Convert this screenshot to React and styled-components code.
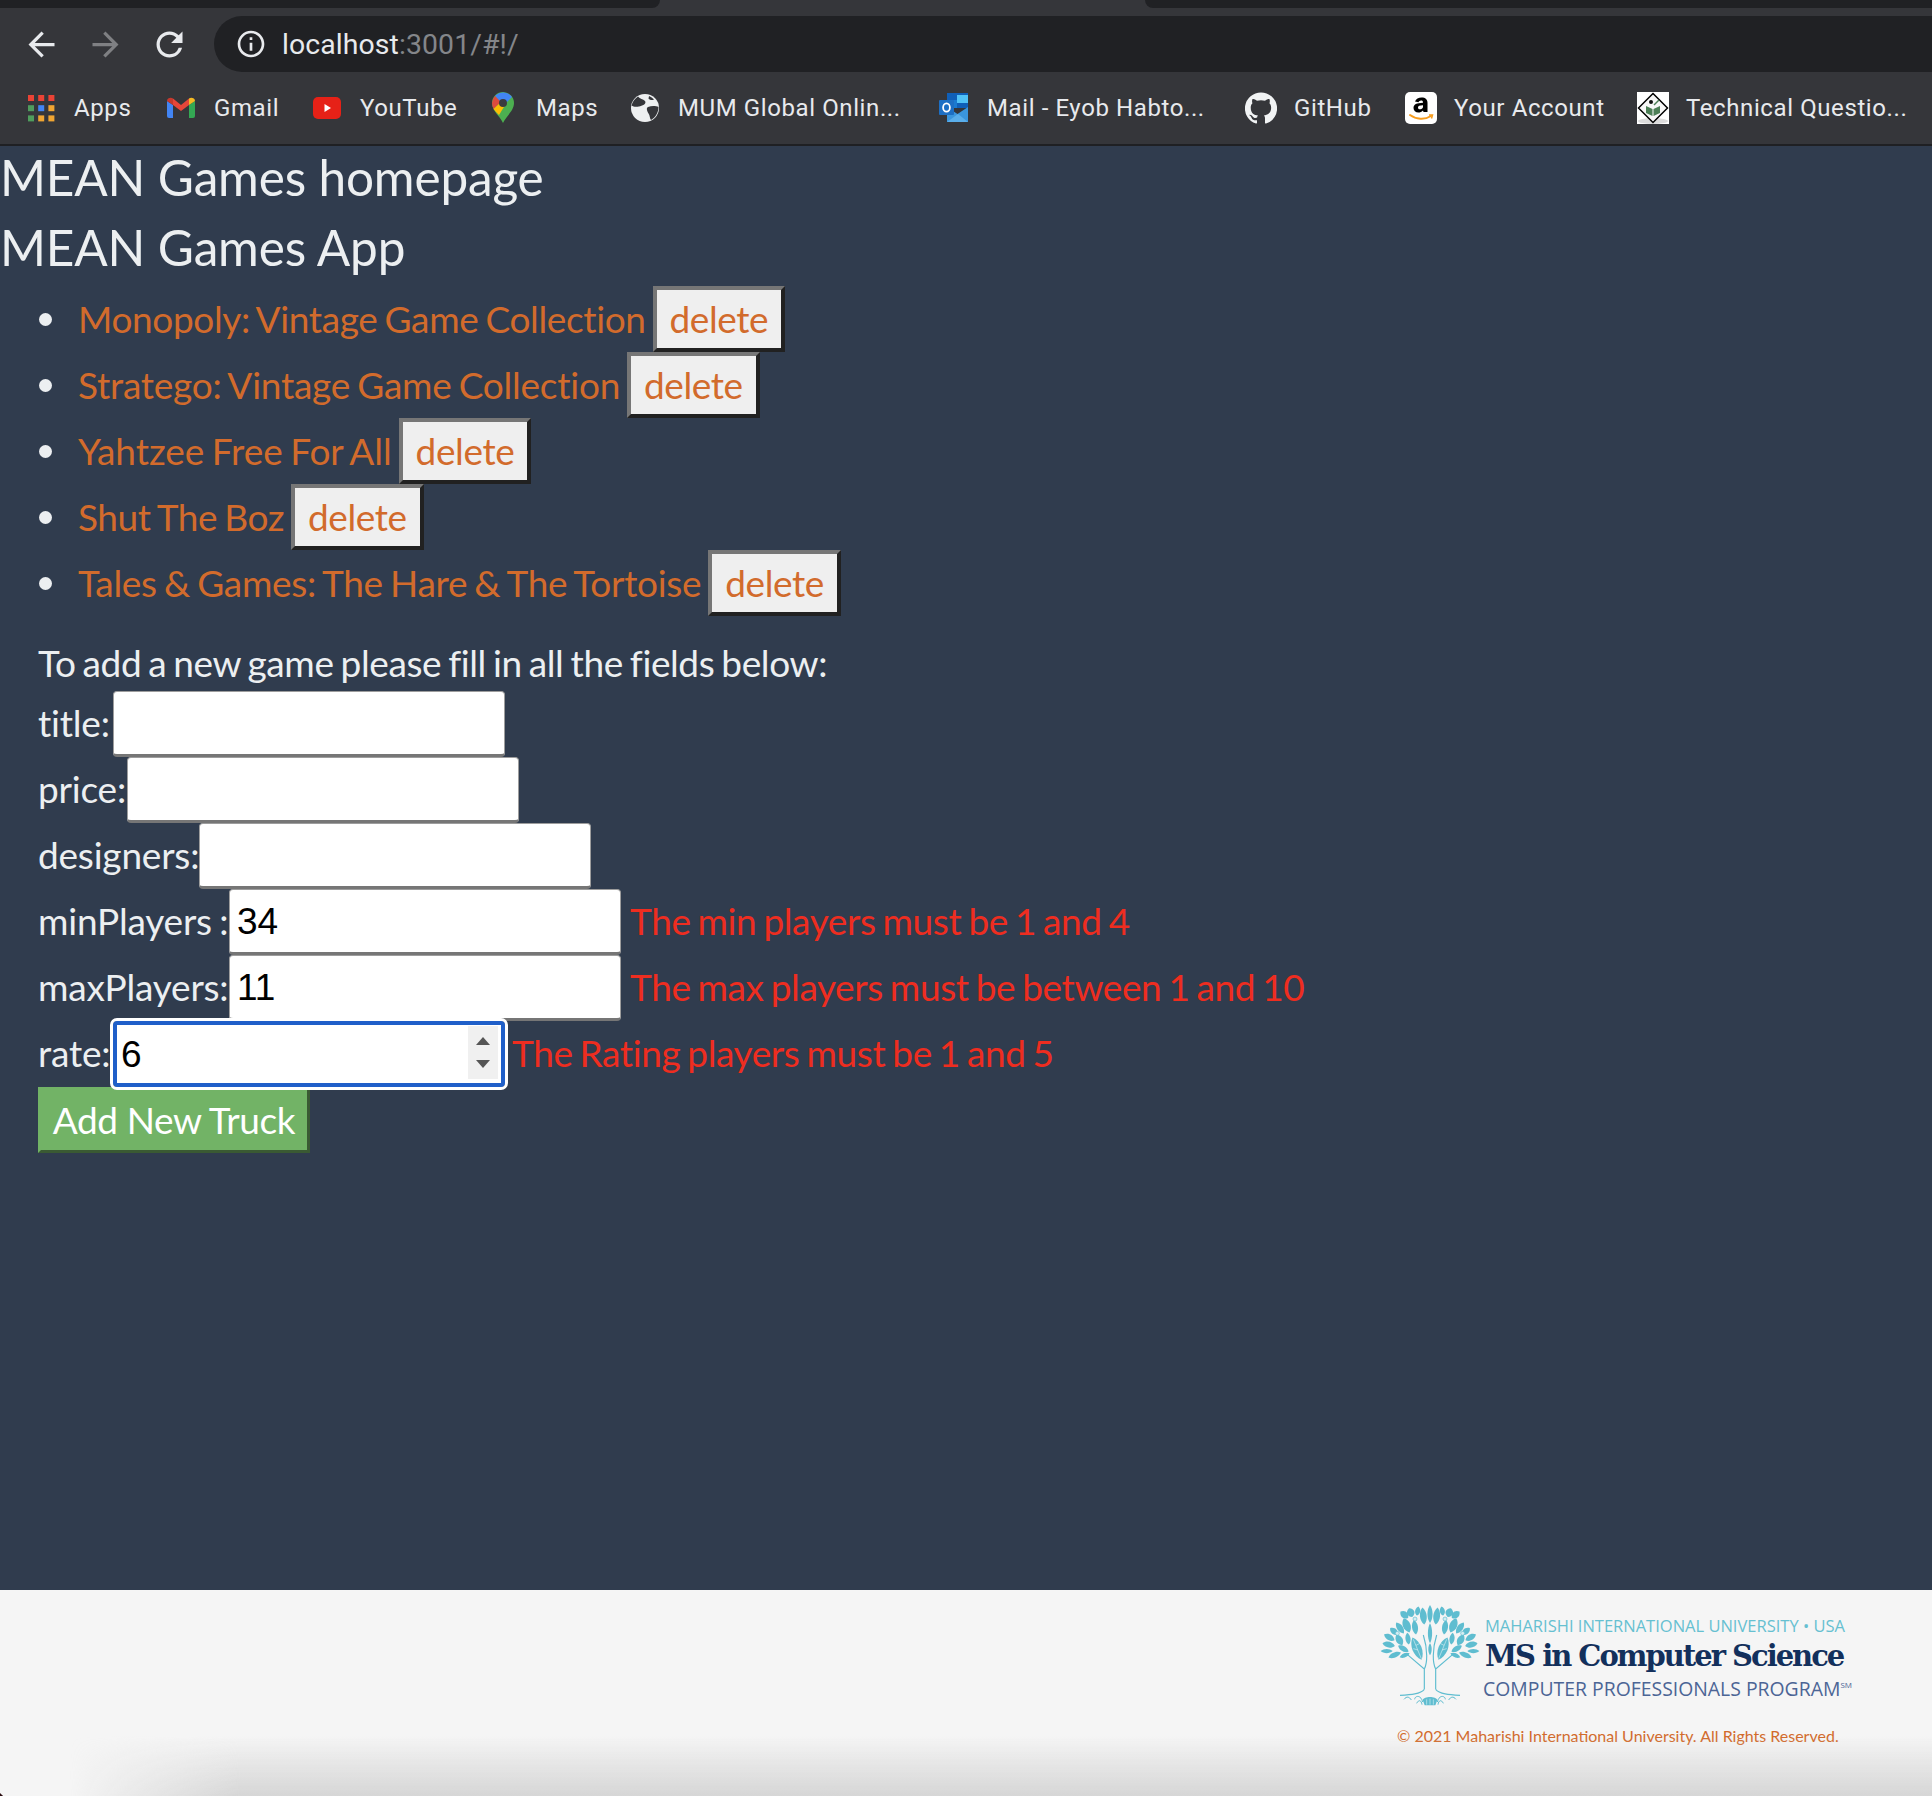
import React from "react";
import styled, { createGlobalStyle } from "styled-components";

const Global = createGlobalStyle`
  html, body { margin: 0; padding: 0; background: #303c4e; }
  body { width: 1932px; height: 1796px; overflow: hidden; font-family: Lato, "Liberation Sans", sans-serif; }
`;

const Page = styled.div`
  width: 1932px; height: 1796px; display: flex; flex-direction: column; position: relative; overflow: hidden;
`;
const TabStrip = styled.div`
  height: 8px; background: #35363a; display: flex; justify-content: space-between;
`;
const Tab = styled.div`
  height: 8px; background: #202124; width: ${p => p.$w}px;
  border-radius: ${p => (p.$side === "left" ? "0 0 14px 0" : "0 0 0 14px")};
`;
const Toolbar = styled.div`
  height: 64px; background: #35363a; display: flex; align-items: flex-start; padding-top: 8px; box-sizing: border-box;
`;
const NavIcons = styled.div`
  width: 214px; height: 56px; display: flex; align-items: center; padding-left: 22px; gap: 25px; box-sizing: border-box;
`;
const NavBtn = styled.svg`
  width: 39px; height: 39px; fill: ${p => (p.$dim ? "#7f8083" : "#e8eaed")}; flex: none;
`;
const Omnibox = styled.div`
  flex: 1; height: 56px; background: #202124; border-radius: 28px 0 0 28px; display: flex; align-items: center; padding-left: 21px; gap: 15px;
`;
const InfoIcon = styled.svg` width: 32px; height: 32px; fill: #e8eaed; flex: none; `;
const Url = styled.div`
  font-family: Roboto, sans-serif; font-size: 28.4px; color: #e8eaed; letter-spacing: 0.1px;
  span { color: #84868a; }
`;
const Bookmarks = styled.div`
  height: 74px; box-sizing: border-box; background: #35363a; border-bottom: 2px solid #1f2023;
  display: flex; align-items: center; padding-left: 25px;
`;
const Bookmark = styled.div`
  display: flex; align-items: center; gap: 17px; flex: none; width: ${p => (p.$w ? `${p.$w}px` : "auto")};
  font-family: Roboto, sans-serif; font-size: 24px; color: #e8eaed; letter-spacing: 0.6px; white-space: nowrap;
`;
const Fav = styled.svg` width: 32px; height: 32px; flex: none; `;

const Main = styled.main`
  flex: 1; background: #303c4e; color: #eceff1; font-size: 37px; line-height: 66px; display: flex; flex-direction: column;
  letter-spacing: -0.4px; word-spacing: -2px;
`;
const Title = styled.h1`
  margin: 0; font-size: 49.5px; font-weight: 400; line-height: 62px; color: #eceff1; height: 70px; letter-spacing: -0.15px; word-spacing: 0;
`;
const GameList = styled.ul`
  margin: 0; padding: 0 0 0 38px; list-style: none; display: flex; flex-direction: column;
`;
const GameItem = styled.li`
  display: flex; align-items: center; height: 66px; padding-left: 40px; position: relative;
  &::before { content: ""; position: absolute; left: 1px; top: 27px; width: 13px; height: 13px; border-radius: 50%; background: #eceff1; }
`;
const GameLink = styled.a`
  color: #d26b2c; text-decoration: none; margin-right: 7px; white-space: nowrap; letter-spacing: ${p => p.$sp}px;
`;
const DeleteBtn = styled.button`
  height: 66px; box-sizing: border-box; padding: 0 13px 2px; background: #efefef; color: #d26b2c;
  border-width: 4px; border-style: solid; border-color: #767676 #212121 #212121 #767676;
  font: inherit; line-height: 1; letter-spacing: inherit;
`;
const Form = styled.form` margin: 0; padding: 0 0 0 38px; display: flex; flex-direction: column; `;
const Hint = styled.div` height: 75px; padding-top: 22px; box-sizing: border-box; line-height: 50px; white-space: nowrap; `;
const Row = styled.div` display: flex; align-items: center; height: 66px; white-space: nowrap; `;
const FieldLabel = styled.label` flex: none; width: ${p => p.$w}px; margin-bottom: 2px; letter-spacing: -0.2px; `;
const Field = styled.div`
  width: 392px; height: 66px; box-sizing: border-box; background: #fff; border-radius: 4px; padding-top: 2px;
  ${p => (p.$focus
    ? "border: 4px solid #1f5fc9; outline: 3px solid #fff; outline-offset: 0; padding-left: 4px;"
    : "border: 1px solid #9d9d9d; border-bottom: 3px solid #767676; padding-left: 7px;")}
  color: #000; font-family: "Liberation Sans", sans-serif; font-size: 37px; letter-spacing: 0; display: flex; align-items: center; position: relative;
  flex: none;
`;
const Spinner = styled.div`
  position: absolute; right: 3px; top: 1px; bottom: 4px; width: 30px; background: #f0f0f0; display: flex; flex-direction: column; align-items: center; justify-content: center; gap: 15px;
`;
const Arrow = styled.span`
  width: 0; height: 0; border-left: 7.5px solid transparent; border-right: 7.5px solid transparent;
  ${p => (p.$down ? "border-top: 8px solid #555;" : "border-bottom: 8px solid #555;")}
`;
const Error = styled.span` color: #ee2d20; margin-left: ${p => p.$ml ?? 9}px; margin-bottom: 2px; `;
const AddBtn = styled.button`
  width: 272px; height: 66px; box-sizing: border-box; background: #72b366; color: #fff; font: inherit; line-height: 1; padding: 0 0 2px; letter-spacing: inherit;
  border-width: 3px; border-style: solid; border-color: #72b366 #3a5a33 #3a5a33 #72b366; white-space: nowrap;
`;

const Footer = styled.footer`
  height: 206px; background: #f5f5f5; position: relative; display: flex; flex-direction: column; align-items: flex-end; padding: 14px 0 0 0; box-sizing: border-box;
  &::after { content: ""; position: absolute; left: 0; right: 0; bottom: 0; height: 60px;
    background: linear-gradient(to bottom, rgba(210,210,210,0), rgba(208,208,208,.85));
    -webkit-mask-image: linear-gradient(to right, transparent 70px, #000 240px); mask-image: linear-gradient(to right, transparent 70px, #000 240px); }
  &::before { content: ""; position: absolute; left: -7px; bottom: -7px; width: 10px; height: 10px; background: #2a0d10; transform: rotate(45deg); }
`;
const Logo = styled.div` display: flex; align-items: flex-start; width: 552px; gap: 5px; box-sizing: border-box; `;
const Tree = styled.svg` width: 100px; height: 104px; flex: none; `;
const LogoText = styled.div` display: flex; flex-direction: column; white-space: nowrap; padding-top: 11px; `;
const LogoTop = styled.div` font-family: "Open Sans", sans-serif; font-size: 16.5px; color: #66c0d1; line-height: 22px; `;
const LogoMain = styled.div` font-family: "DejaVu Serif", serif; font-weight: 700; font-size: 29px; color: #13305c; line-height: 38px; letter-spacing: -2px; `;
const LogoSub = styled.div`
  font-family: "Open Sans", sans-serif; font-size: 19.4px; color: #4c6595; line-height: 28px; margin-left: -2px;
  sup { font-size: 8px; vertical-align: 8px; line-height: 0; }
`;
const Copyright = styled.div` font-size: 16px; color: #d26b2c; width: 535px; line-height: 22px; margin-top: 17px; white-space: nowrap; `;

const games = [
  { title: "Monopoly: Vintage Game Collection", sp: -0.37 },
  { title: "Stratego: Vintage Game Collection", sp: -0.25 },
  { title: "Yahtzee Free For All", sp: -0.03 },
  { title: "Shut The Boz", sp: -0.4 },
  { title: "Tales & Games: The Hare & The Tortoise", sp: -0.3 },
];

const leafPath = (w, h) => `M0 ${-h} C${w} ${-h / 2} ${w} ${h / 2} 0 ${h} C${-w} ${h / 2} ${-w} ${-h / 2} 0 ${-h}Z`;
const Leaf = ({ x, y, r, w, h, fill = "#5fbdd0" }) => (
  <path d={leafPath(w * 1.7, h)} fill={fill} transform={`translate(${x} ${y}) rotate(${r})`} />
);
const sideLeaves = [
  [160,48,-6,8,26],[143,33,10,6,14],[122,38,-20,9,14],[103,44,-50,8,15],[135,82,-8,7,22],[110,76,-22,9,23],[90,84,-35,7,20],[72,94,-50,7,15],
  [58,112,-60,7,18],[88,120,-30,8,18],[114,116,-8,6,18],[56,134,-78,7,19],[50,153,-90,5,18],[74,165,-112,6,20],[100,146,-60,6,18],[104,166,-112,5,16],
];
const TreeSide = () => (
  <g>
    {sideLeaves.map(([x, y, r, w, h], i) => <Leaf key={i} x={x} y={y} r={r} w={w} h={h} />)}
    <Leaf x={141} y={146} r={-22} w={11} h={36} />
    <path d="M154 176 L130 118 M144 150 L130 146 M138 136 L150 130" stroke="#d3edf2" strokeWidth="2" fill="none" />
    <circle cx="135" cy="57" r="6" fill="#d3edf2" stroke="#5fbdd0" strokeWidth="2" />
    <circle cx="82" cy="100" r="6" fill="#d3edf2" stroke="#5fbdd0" strokeWidth="2" />
    <g fill="none" stroke="#5fbdd0" strokeWidth="3.500">
      <path d="M163 268 L163 207 L108 160" />
      <path d="M163 207 C172 190 174 150 160 105" />
      <path d="M163 268 C152 282 122 284 90 286" />
      <path d="M102 298 C110 288 118 290 124 300 M134 298 C134 288 152 282 158 306 M140 310 C146 298 154 300 156 314" strokeWidth="3" />
    </g>
  </g>
);
function TreeLogo() {
  return (
    <Tree viewBox="30 12 300 312">
      <TreeSide />
      <g transform="matrix(-1 0 0 1 360 0)"><TreeSide /></g>
      <Leaf x={180} y={42} r={0} w={6} h={27} />
      <Leaf x={180} y={100} r={0} w={5} h={30} />
      <Leaf x={180} y={148} r={0} w={4} h={18} />
      <path d="M158 300 C162 288 198 288 202 300 L196 316 H164 Z" fill="#5fbdd0" />
      <path d="M170 314 V298 M180 314 V296 M190 314 V298" stroke="#d3edf2" strokeWidth="2" />
    </Tree>
  );
}

const AppsIcon = () => (
  <Fav viewBox="0 0 32 32">
    {["#ea4335","#ea4335","#ea4335","#4f9d5d","#4285f4","#f0a532","#4f9d5d","#f0a532","#f0a532"].map((c, i) => (
      <rect key={i} x={3 + (i % 3) * 10.2} y={3 + Math.floor(i / 3) * 10.2} width="6" height="6" fill={c} />
    ))}
  </Fav>
);
const GmailIcon = () => (
  <Fav viewBox="0 0 32 32">
    <path d="M2 9 V24 Q2 26 4 26 H8 V13 Z" fill="#4285f4" />
    <path d="M30 9 V24 Q30 26 28 26 H24 V13 Z" fill="#34a853" />
    <path d="M8 13 L16 19 L24 13 V6.500 L16 13 L8 6.500 Z" fill="#e6463a" />
    <path d="M2 9 C2 6 6 5 8 6.500 V13 Z" fill="#c5392e" />
    <path d="M30 9 C30 6 26 5 24 6.500 V13 Z" fill="#f4b923" />
  </Fav>
);
const YouTubeIcon = () => (
  <Fav viewBox="0 0 32 32">
    <rect x="2" y="5" width="28" height="22" rx="5" fill="#e62117" />
    <path d="M13.500 12 L20 16 L13.500 20 Z" fill="#fff" />
  </Fav>
);
const MapsIcon = () => (
  <Fav viewBox="0 0 32 32">
    <path d="M16 31 C13 24 5 19 5 11 A11 11 0 0 1 27 11 C27 19 19 24 16 31 Z" fill="#4caf50" />
    <path d="M8 4 A11 11 0 0 1 25 5 L18 12 L12 9 Z" fill="#4285f4" />
    <path d="M5 11 A11 11 0 0 1 8 4 L14 10 L6.500 17 C5.500 15 5 13 5 11 Z" fill="#dd4b3e" />
    <path d="M6.500 17 L14 10 H20 L12 23 C10 21 8 19 6.500 17 Z" fill="#fbbc04" />
    <circle cx="16" cy="11" r="4" fill="#3a3b3f" />
  </Fav>
);
const GlobeIcon = () => (
  <Fav viewBox="0 0 32 32">
    <circle cx="16" cy="16" r="14" fill="#eef0f1" />
    <path d="M9 4.500 C11 7 14 7 16 9 C18 12 13 14 10 14.500 C7 15 4.500 15 2.500 13.500 C3.500 9.500 6 6.500 9 4.500 Z" fill="#35363a" />
    <path d="M19 15 C23 13.500 27 14 29.500 15 C29.500 20 27 25 22 28 C20.500 26 21 23.500 19.500 21.500 C18 19 17 16 19 15 Z" fill="#35363a" />
    <path d="M20 4 C22 5 23.500 6 25 7.500 C23 8.500 20.500 8 19.500 6.500 Z" fill="#35363a" />
  </Fav>
);
const OutlookIcon = () => (
  <Fav viewBox="0 0 32 32">
    <rect x="9" y="1" width="21" height="15" fill="#0f5fb8" />
    <rect x="19" y="3" width="11" height="8" fill="#50c2f7" />
    <rect x="9" y="8" width="10" height="8" fill="#1b7ad0" />
    <path d="M9 15 L19.500 22 L30 15 V30 H9 Z" fill="#3a96de" />
    <path d="M9 30 L20 22 L30 30 Z" fill="#5aaeea" />
    <rect x="1" y="8" width="15" height="15" rx="1" fill="#1d6fc4" />
    <ellipse cx="8.500" cy="15.500" rx="3.400" ry="4.200" fill="none" stroke="#fff" strokeWidth="1.800" />
  </Fav>
);
const GithubIcon = () => (
  <Fav viewBox="0 0 24 24">
    <path fill="#f1f3f4" d="M12 .3a12 12 0 0 0-3.800 23.400c.6.100.8-.3.8-.6v-2c-3.300.7-4-1.600-4-1.600-.6-1.400-1.400-1.800-1.400-1.800-1-.7.100-.7.100-.7 1.200 0 1.900 1.200 1.900 1.200 1 1.800 2.800 1.300 3.500 1 0-.8.400-1.300.7-1.600-2.700-.3-5.500-1.300-5.500-6 0-1.200.500-2.300 1.300-3.100-.2-.4-.6-1.600 0-3.200 0 0 1-.3 3.400 1.200a11.500 11.500 0 0 1 6 0c2.300-1.500 3.300-1.200 3.300-1.200.6 1.600.2 2.800 0 3.200.9.8 1.300 1.900 1.300 3.200 0 4.600-2.800 5.600-5.500 5.900.5.400.9 1 .9 2.200v3.300c0 .3.100.7.8.6A12 12 0 0 0 12 .3" />
  </Fav>
);
const AmazonIcon = () => (
  <Fav viewBox="0 0 32 32">
    <rect width="32" height="32" rx="5" fill="#fff" />
    <path d="M10 9.500 C11 7 13.500 5.500 16.500 5.500 C20.500 5.500 22.500 7.500 22.500 11 V20 H18.500 L18 18.500 C16.500 20 15 20.500 13.500 20.500 C10.500 20.500 8.500 18.500 8.500 16 C8.500 12.500 11.500 11 18 10.800 C18 9 17.500 8.500 16 8.500 C14.800 8.500 14 9.200 13.500 10.300 Z M18 13.300 C14.500 13.500 13 14 13 15.500 C13 16.700 13.700 17.300 14.700 17.300 C16 17.300 18 16.500 18 15 Z" fill="#000" fillRule="evenodd" />
    <path d="M5 23 C11 27.500 20 28 26 24" fill="none" stroke="#f79c1c" strokeWidth="2" strokeLinecap="round" />
    <path d="M24 23 L27.500 23 L26.500 26.500" fill="none" stroke="#f79c1c" strokeWidth="1.500" />
  </Fav>
);
const TechIcon = () => (
  <Fav viewBox="0 0 32 32">
    <rect width="32" height="32" fill="#fff" />
    <ellipse cx="16" cy="29" rx="15" ry="3" fill="#dcdcdc" />
    <path d="M16 1.500 L30.500 16 L16 30.500 L1.500 16 Z" fill="#f7f7f7" stroke="#000" strokeWidth="1.500" />
    <path d="M9 14 L15.500 17 V24 L9 21 Z M23 14 L16.500 17 V24 L23 21 Z" fill="#4c7f56" />
    <circle cx="14" cy="10" r="2" fill="#111" />
    <path d="M17 13 L22 8" stroke="#4c7f56" strokeWidth="1.500" />
  </Fav>
);

export default function App() {
  return (
    <Page>
      <Global />
      <TabStrip>
        <Tab $w={660} $side="left" />
        <Tab $w={787} $side="right" />
      </TabStrip>
      <Toolbar>
        <NavIcons>
          <NavBtn viewBox="0 0 24 24"><path d="M20 11H7.830l5.590-5.590L12 4l-8 8 8 8 1.410-1.410L7.830 13H20v-2z" /></NavBtn>
          <NavBtn viewBox="0 0 24 24" $dim><path d="M4 13h12.170l-5.590 5.590L12 20l8-8-8-8-1.410 1.410L16.170 11H4v2z" /></NavBtn>
          <NavBtn viewBox="0 0 24 24"><path d="M17.650 6.350A7.958 7.958 0 0 0 12 4c-4.420 0-7.990 3.580-7.990 8s3.570 8 7.990 8c3.730 0 6.840-2.550 7.730-6h-2.080A5.990 5.990 0 0 1 12 18c-3.310 0-6-2.690-6-6s2.690-6 6-6c1.660 0 3.140.690 4.220 1.780L13 11h7V4l-2.350 2.350z" /></NavBtn>
        </NavIcons>
        <Omnibox>
          <InfoIcon viewBox="0 0 24 24"><path d="M11 7h2v2h-2zm0 4h2v6h-2zm1-9C6.480 2 2 6.480 2 12s4.480 10 10 10 10-4.480 10-10S17.520 2 12 2zm0 18c-4.410 0-8-3.590-8-8s3.590-8 8-8 8 3.590 8 8-3.590 8-8 8z" /></InfoIcon>
          <Url>localhost<span>:3001/#!/</span></Url>
        </Omnibox>
      </Toolbar>
      <Bookmarks>
        <Bookmark $w={140}><AppsIcon />Apps</Bookmark>
        <Bookmark $w={146}><GmailIcon />Gmail</Bookmark>
        <Bookmark $w={176}><YouTubeIcon />YouTube</Bookmark>
        <Bookmark $w={142}><MapsIcon />Maps</Bookmark>
        <Bookmark $w={309}><GlobeIcon />MUM Global Onlin...</Bookmark>
        <Bookmark $w={307}><OutlookIcon />Mail - Eyob Habto...</Bookmark>
        <Bookmark $w={160}><GithubIcon />GitHub</Bookmark>
        <Bookmark $w={232}><AmazonIcon />Your Account</Bookmark>
        <Bookmark><TechIcon />Technical Questio...</Bookmark>
      </Bookmarks>
      <Main>
        <Title>MEAN Games homepage</Title>
        <Title>MEAN Games App</Title>
        <GameList>
          {games.map(g => (
            <GameItem key={g.title}>
              <GameLink href="#" $sp={g.sp}>{g.title}</GameLink>
              <DeleteBtn type="button">delete</DeleteBtn>
            </GameItem>
          ))}
        </GameList>
        <Form>
          <Hint>To add a new game please fill in all the fields below:</Hint>
          <Row><FieldLabel $w={75}>title:</FieldLabel><Field /></Row>
          <Row><FieldLabel $w={89}>price:</FieldLabel><Field /></Row>
          <Row><FieldLabel $w={161}>designers:</FieldLabel><Field /></Row>
          <Row><FieldLabel $w={191}>minPlayers :</FieldLabel><Field>34</Field><Error>The min players must be 1 and 4</Error></Row>
          <Row><FieldLabel $w={191}>maxPlayers:</FieldLabel><Field>11</Field><Error>The max players must be between 1 and 10</Error></Row>
          <Row><FieldLabel $w={75}>rate:</FieldLabel><Field $focus>6<Spinner><Arrow /><Arrow $down /></Spinner></Field><Error $ml={7}>The Rating players must be 1 and 5</Error></Row>
          <AddBtn type="button">Add New Truck</AddBtn>
        </Form>
      </Main>
      <Footer>
        <Logo>
          <TreeLogo />
          <LogoText>
            <LogoTop>MAHARISHI INTERNATIONAL UNIVERSITY • USA</LogoTop>
            <LogoMain>MS in Computer Science</LogoMain>
            <LogoSub>COMPUTER PROFESSIONALS PROGRAM<sup>SM</sup></LogoSub>
          </LogoText>
        </Logo>
        <Copyright>© 2021 Maharishi International University. All Rights Reserved.</Copyright>
      </Footer>
    </Page>
  );
}
